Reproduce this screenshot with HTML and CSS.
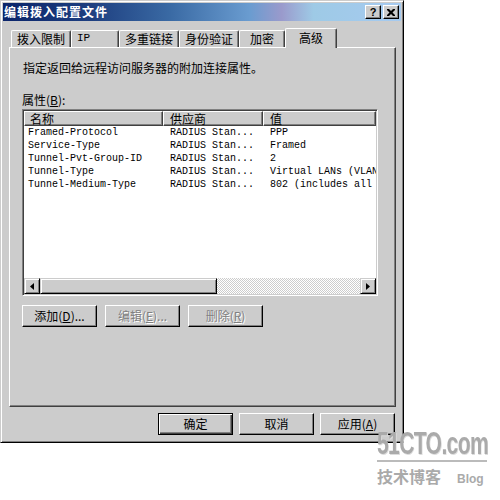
FILE: index.html
```html
<!DOCTYPE html>
<html lang="zh-CN">
<head>
<meta charset="utf-8">
<title>编辑拨入配置文件</title>
<link rel="stylesheet" href="styles.css">
</head>
<body>
<div class="dialog">
  <div class="titlebar">
    <span class="title">编辑拨入配置文件</span>
    <div class="tbtns">
      <span class="tbtn">?</span>
      <span class="tbtn">
        <svg width="8" height="7" viewBox="0 0 8 7"><path d="M0 0h2l2 2 2-2h2v1l-2.5 2.5L8 6v1H6L4 5 2 7H0V6l2.5-2.5L0 1z" fill="#000"/></svg>
      </span>
    </div>
  </div>
  <div class="tabs">
    <div class="tab w60">拨入限制</div>
    <div class="tab w48">IP</div>
    <div class="tab w60">多重链接</div>
    <div class="tab w60">身份验证</div>
    <div class="tab w46">加密</div>
    <div class="tab active">高级</div>
  </div>
  <div class="panel">
    <p class="desc">指定返回给远程访问服务器的附加连接属性。</p>
    <div class="label">属性(<u>B</u>):</div>
    <div class="list">
      <div class="hdr">
        <div class="hcell c1">名称</div>
        <div class="hcell c2">供应商</div>
        <div class="hcell c3">值</div>
      </div>
      <div class="rows">
        <div class="row"><span class="c1">Framed-Protocol</span><span class="c2">RADIUS Stan...</span><span class="c3">PPP</span></div>
        <div class="row"><span class="c1">Service-Type</span><span class="c2">RADIUS Stan...</span><span class="c3">Framed</span></div>
        <div class="row"><span class="c1">Tunnel-Pvt-Group-ID</span><span class="c2">RADIUS Stan...</span><span class="c3">2</span></div>
        <div class="row"><span class="c1">Tunnel-Type</span><span class="c2">RADIUS Stan...</span><span class="c3">Virtual LANs (VLAN</span></div>
        <div class="row"><span class="c1">Tunnel-Medium-Type</span><span class="c2">RADIUS Stan...</span><span class="c3">802 (includes all</span></div>
      </div>
      <div class="hscroll">
        <div class="sbtn"><svg width="4" height="7" viewBox="0 0 4 7"><path d="M4 0v7L0 3.5z" fill="#000"/></svg></div>
        <div class="thumb"></div>
        <div class="track"></div>
        <div class="sbtn"><svg width="4" height="7" viewBox="0 0 4 7"><path d="M0 0v7l4-3.5z" fill="#000"/></svg></div>
      </div>
    </div>
    <div class="btnrow">
      <div class="btn">添加(<u>D</u>)...</div>
      <div class="btn disabled">编辑(<u>E</u>)...</div>
      <div class="btn disabled">删除(<u>R</u>)</div>
    </div>
  </div>
  <div class="footer">
    <div class="btn default">确定</div>
    <div class="btn">取消</div>
    <div class="btn">应用(<u>A</u>)</div>
  </div>
</div>
<div class="watermark">
  <div class="wm-big">51CTO.com</div>
  <div class="wm-line"></div>
  <div class="wm-small"><span class="wm-cn">技术博客</span><span class="wm-blog">Blog</span></div>
</div>
</body>
</html>
```
FILE: styles.css
```css
* { box-sizing: border-box; }
body {
  margin: 0;
  background: #fff;
  font-family: "Noto Sans CJK SC", "Liberation Sans", sans-serif;
  font-size: 12px;
  color: #000;
  overflow: hidden;
}
.dialog {
  width: 404px;
  height: 443px;
  background: #ccc;
  border: 1px solid;
  border-color: #ccc #000 #000 #ccc;
  box-shadow: inset 1px 1px #fff, inset -1px -1px #808080;
  padding: 2px;
  display: flex;
  flex-direction: column;
}
.titlebar {
  height: 18px;
  background: linear-gradient(90deg, #0a246a 0%, #1e3f80 22%, #3a6aa4 42%, #6a9cd0 62%, #9a9acc 70%, #9ecae6 78%, #a6caf0 100%);
  display: flex;
  align-items: center;
  justify-content: space-between;
  padding: 0 2px 0 1px;
}
.title {
  color: #fff;
  font-weight: bold;
  font-size: 12px;
  letter-spacing: 1px;
  line-height: 14px;
}
.tbtns { display: flex; gap: 2px; }
.tbtn {
  width: 16px;
  height: 14px;
  background: #ccc;
  border: 1px solid;
  border-color: #fff #000 #000 #fff;
  box-shadow: inset -1px -1px #808080;
  display: flex;
  align-items: center;
  justify-content: center;
  font: bold 11px "Liberation Sans", sans-serif;
  line-height: 12px;
}
.tabs {
  display: flex;
  align-items: flex-end;
  margin-top: 7px;
  padding-left: 8px;
  height: 19px;
  position: relative;
  z-index: 1;
}
.tab {
  height: 17px;
  border: 1px solid;
  border-color: #fff #404040 transparent #fff;
  border-bottom: none;
  border-radius: 2px 2px 0 0;
  box-shadow: inset -1px 0 #808080;
  text-align: center;
  line-height: 15px;
  font-size: 12px;
}
.w60 { width: 60px; }
.w48 { width: 48px; }
.w46 { width: 46px; }
.tab.w48 { font-family: "Liberation Mono", monospace; font-size: 11px; text-align: left; padding-left: 5px; }
.tab.active {
  width: 52px;
  height: 20px;
  margin-bottom: -1px;
  background: #ccc;
  line-height: 17px;
}
.panel {
  margin: 0 5px 0 6px;
  height: 360px;
  border: 1px solid;
  border-color: #fff #404040 #404040 #fff;
  box-shadow: inset -1px -1px #808080;
  padding: 13px 12px 0 12px;
  display: flex;
  flex-direction: column;
}
.desc { margin: 0; padding-left: 1px; line-height: 14px; }
.label { margin-top: 18px; line-height: 14px; height: 16px; }
.list {
  width: 356px;
  height: 187px;
  background: #fff;
  border: 1px solid;
  border-color: #808080 #fff #fff #808080;
  box-shadow: inset 1px 1px #404040, inset -1px -1px #ccc;
  padding: 1px;
  display: flex;
  flex-direction: column;
}
.hdr { display: flex; height: 15px; }
.hcell {
  background: #ccc;
  border: 1px solid;
  border-color: #fff #404040 #404040 #fff;
  box-shadow: inset -1px -1px #808080;
  line-height: 13px;
  font-size: 12px;
  white-space: nowrap;
}
.hdr .c1 { width: 139px; padding-left: 5px; }
.hdr .c2 { width: 100px; padding-left: 6px; }
.hdr .c3 { flex: 1; padding-left: 6px; }
.rows { flex: 1; padding-top: 0; }
.row {
  display: flex;
  height: 13px;
  line-height: 13px;
  font-family: "Liberation Mono", monospace;
  font-size: 10px;
  white-space: nowrap;
}
.row .c1 { width: 139px; padding-left: 4px; }
.row .c2 { width: 100px; padding-left: 7px; }
.row .c3 { flex: 1; padding-left: 7px; overflow: hidden; }
.hscroll { display: flex; height: 16px; }
.sbtn {
  width: 16px;
  height: 16px;
  background: #ccc;
  border: 1px solid;
  border-color: #ccc #000 #000 #ccc;
  box-shadow: inset 1px 1px #fff, inset -1px -1px #808080;
  display: flex;
  align-items: center;
  justify-content: center;
}
.thumb {
  width: 177px;
  background: #ccc;
  border: 1px solid;
  border-color: #ccc #000 #000 #ccc;
  box-shadow: inset 1px 1px #fff, inset -1px -1px #808080;
}
.track {
  flex: 1;
  background: repeating-conic-gradient(#ccc 0 25%, #fff 0 50%) 0 0 / 2px 2px;
}
.btnrow { display: flex; gap: 8px; margin-top: 9px; }
.btn {
  width: 75px;
  height: 22px;
  background: #ccc;
  border: 1px solid;
  border-color: #fff #000 #000 #fff;
  box-shadow: inset -1px -1px #808080;
  display: flex;
  align-items: center;
  justify-content: center;
  font-size: 12px;
  line-height: 14px;
}
.btn.disabled { color: #808080; text-shadow: 1px 1px #fff; }
.btn.default {
  border-color: #000;
  box-shadow: inset 1px 1px #fff, inset -1px -1px #404040, inset -2px -2px #808080;
}
.footer {
  display: flex;
  justify-content: flex-end;
  gap: 6px;
  margin-top: 6px;
  padding-right: 6px;
}
.watermark {
  position: absolute;
  left: 377px;
  top: 427px;
  width: 116px;
  height: 60px;
  overflow: hidden;
  color: #a0a0a0;
}
.wm-big {
  font-family: "Liberation Sans", sans-serif;
  font-weight: bold;
  font-size: 32px;
  line-height: 32px;
  letter-spacing: -1px;
  color: #aaa;
  text-shadow: 1px 1px #ddd;
  white-space: nowrap;
  transform: scaleX(0.66);
  transform-origin: left top;
}
.wm-line { height: 2px; background: #bbb; margin: 1px 0 2px 0; width: 110px; }
.wm-small { display: flex; align-items: baseline; gap: 16px; }
.wm-cn { font-size: 16px; font-weight: bold; color: #aaa; }
.wm-blog { font-family: "Liberation Sans", sans-serif; font-size: 12px; font-weight: bold; color: #aaa; }
```
